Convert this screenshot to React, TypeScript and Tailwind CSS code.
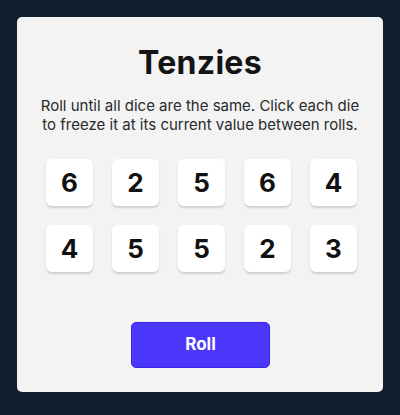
import React, { useState } from "react";

const start = [6, 2, 5, 6, 4, 4, 5, 5, 2, 3];

export default function App() {
    const [dice, setDice] = useState(start.map((v) => ({ value: v, held: false })));

    const hold = (i: number) =>
        setDice((prev) => prev.map((d, j) => (j === i ? { ...d, held: !d.held } : d)));

    const roll = () =>
        setDice((prev) =>
            prev.map((d) => (d.held ? d : { ...d, value: Math.ceil(Math.random() * 6) }))
        );

    return (
        <div className="min-h-[415px] w-[400px] bg-[#10202f] pt-[17px] px-[17px] pb-[23px] font-['Inter',sans-serif]">
            <main className="h-[375px] rounded-[5px] bg-[#f3f3f3] flex flex-col items-center pt-[26px]">
                <h1 className="text-[32px] leading-[40px] font-bold text-[#141414] tracking-[0.3px]">Tenzies</h1>
                <p className="mt-[13px] w-[328px] text-center text-[15px] leading-[19px] text-[#2a2a2a]">
                    Roll until all dice are the same. Click each die to freeze it at its current value between rolls.
                </p>

                {/* Dice grid */}
                <div className="mt-[25px] ml-[3px] grid grid-cols-5 gap-[19px]">
                    {dice.map((d, i) => (
                        <button
                            key={i}
                            onClick={() => hold(i)}
                            className={`w-[47px] h-[47px] rounded-[6px] flex items-center justify-center text-[26px] font-bold text-[#111] shadow-[0_2px_2px_rgba(0,0,0,0.15)] ${
                                d.held ? "bg-[#59e391]" : "bg-white"
                            }`}
                        >
                            {d.value}
                        </button>
                    ))}
                </div>

                <button
                    onClick={roll}
                    className="mt-[50px] ml-[1px] w-[139px] h-[46px] rounded-[5px] bg-[#4c38fb] border border-[#3a27e0] text-white text-[17px] font-bold"
                >
                    Roll
                </button>
            </main>
        </div>
    );
}
